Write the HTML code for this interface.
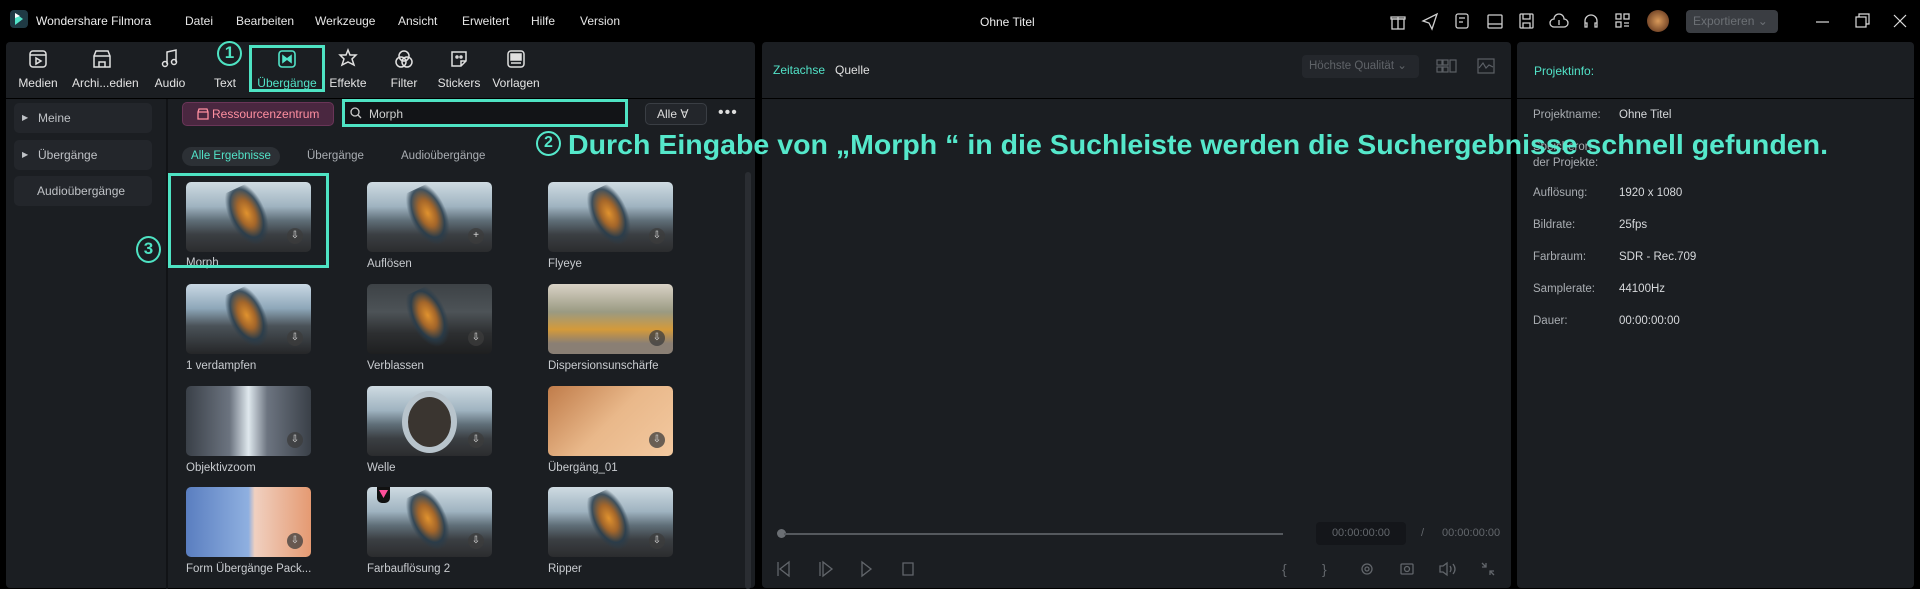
<!DOCTYPE html>
<html><head><meta charset="utf-8"><style>
*{box-sizing:border-box;margin:0;padding:0}
body{width:1920px;height:589px;background:#000;font-family:"Liberation Sans",sans-serif;color:#cfd2d6;position:relative;overflow:hidden;font-size:12px}
.a{position:absolute}
.panel{position:absolute;background:#1b1e22;border-radius:4px}
.menu span{position:absolute;top:14px;font-size:12px;color:#e6e6e6}
.tb{position:absolute;top:48px;width:60px;text-align:center;font-size:12px;color:#e4e4e4}
.tb svg{display:block;margin:0 auto 6px;width:22px;height:22px}
.side{position:absolute;left:14px;width:138px;height:30px;background:#23262b;border-radius:5px;font-size:12px;color:#bfc2c6;line-height:30px;padding-left:24px}
.th{position:absolute;width:125px;height:70px;border-radius:5px;overflow:hidden;background:linear-gradient(#cfdbe2 0%,#9fb3c0 35%,#5f6e78 55%,#3b3f43 75%,#2b2c2e 100%)}
.th .fig{position:absolute;left:44px;top:4px;width:36px;height:60px;background:radial-gradient(ellipse at 50% 45%,#e0922e 0%,#a4662a 30%,rgba(40,60,75,.85) 55%,transparent 72%);transform:rotate(-25deg)}
.th .dl{position:absolute;right:8px;bottom:8px;width:16px;height:16px;border-radius:50%;background:rgba(60,60,60,.75);color:#ddd;font-size:10px;text-align:center;line-height:16px}
.lbl{position:absolute;font-size:11.5px;color:#c9ccd0;white-space:nowrap}
.ri span{position:absolute;font-size:11.5px}
.k{color:#a9adb2}.v{color:#d7d9dc}
</style></head><body>
<div class="a" style="left:10px;top:10px;width:18px;height:18px;border-radius:4px;background:#1f3a44"></div>
<svg class="a" style="left:12px;top:12px" width="14" height="14"><path d="M3 1 L11 7 L3 13 Z" fill="#52e3c8"/><path d="M3 1 L8 4 L3 6Z" fill="#fff"/></svg>
<div class="a" style="left:36px;top:14px;font-size:12px;color:#eee">Wondershare Filmora</div>
<div class="menu"><span style="left:185px">Datei</span><span style="left:236px">Bearbeiten</span><span style="left:315px">Werkzeuge</span><span style="left:398px">Ansicht</span><span style="left:462px">Erweitert</span><span style="left:531px">Hilfe</span><span style="left:580px">Version</span></div>
<div class="a" style="left:980px;top:15px;font-size:12px;color:#eee">Ohne Titel</div>
<svg class="a" style="left:1390px;top:12px" width="270" height="20" fill="none" stroke="#cfcfcf" stroke-width="1.3">
<g><rect x="2" y="7" width="12" height="10"/><path d="M1 5h14v2H1zM8 5v12"/></g>
<g transform="translate(32,0)"><path d="M1 9 L15 2 L10 17 L7 11Z"/></g>
<g transform="translate(64,0)"><rect x="2" y="2" width="12" height="14" rx="2"/><path d="M5 6h6M5 10h4"/></g>
<g transform="translate(96,0)"><rect x="2" y="3" width="14" height="13" rx="1"/><path d="M2 12h14"/></g>
<g transform="translate(128,0)"><rect x="2" y="2" width="13" height="14" rx="1"/><path d="M5 2v5h7V2M5 16v-5h7v5"/></g>
<g transform="translate(160,0)"><path d="M4 15a4 4 0 0 1 0-8a5 5 0 0 1 10 0a4 4 0 0 1 0 8z"/><path d="M9 8v5"/></g>
<g transform="translate(192,0)"><path d="M3 11V9a6 6 0 0 1 12 0v2M3 11h2v4H3zM13 11h2v4h-2z"/></g>
<g transform="translate(224,0)"><rect x="2" y="2" width="5" height="5"/><rect x="10" y="2" width="5" height="5"/><rect x="2" y="10" width="5" height="5"/><path d="M10 11h5M10 14h5"/></g>
</svg>
<div class="a" style="left:1647px;top:10px;width:22px;height:22px;border-radius:50%;background:radial-gradient(#d99a5a,#7a4a2a 70%,#333)"></div>
<div class="a" style="left:1686px;top:10px;width:92px;height:23px;border-radius:4px;background:#3a3d42;color:#6c7075;font-size:12px;line-height:23px;padding-left:7px">Exportieren &#8964;</div>
<svg class="a" style="left:1812px;top:12px" width="100" height="18" fill="none" stroke="#ddd" stroke-width="1.2"><path d="M4 10h13"/><rect x="44" y="5" width="10" height="10"/><path d="M47 5V2h10v10h-3"/><path d="M82 3l12 12M94 3L82 15"/></svg>

<div class="panel" style="left:6px;top:42px;width:749px;height:546px"></div>
<div class="a" style="left:6px;top:98px;width:749px;height:1px;background:#000"></div>
<div class="a" style="left:166px;top:99px;width:2px;height:490px;background:#111316"></div>
<div class="tb" style="left:8px"><svg viewBox="0 0 22 22" fill="none" stroke="#e0e0e0" stroke-width="1.5"><rect x="3" y="3" width="16" height="16" rx="3"/><path d="M3 7h16M9 10l5 3-5 3z"/></svg>Medien</div>
<div class="tb" style="left:72px"><svg viewBox="0 0 22 22" fill="none" stroke="#e0e0e0" stroke-width="1.5"><path d="M3 8l2-5h12l2 5v11H3z M3 8h16M8 19v-5h6v5"/></svg>Archi...edien</div>
<div class="tb" style="left:140px"><svg viewBox="0 0 22 22" fill="none" stroke="#e0e0e0" stroke-width="1.5"><path d="M8 16V4l9-2v12"/><circle cx="6" cy="16" r="2.5"/><circle cx="15" cy="14" r="2.5"/></svg>Audio</div>
<div class="tb" style="left:195px"><svg viewBox="0 0 22 22"></svg>Text</div>
<div class="tb" style="left:257px;color:#52e3c8"><svg viewBox="0 0 22 22" fill="none" stroke="#52e3c8" stroke-width="1.6"><rect x="3" y="3" width="16" height="16" rx="3"/><path d="M7 8l4 3-4 3zM15 8l-4 3 4 3z" fill="#52e3c8"/></svg>Übergänge</div>
<div class="tb" style="left:318px"><svg viewBox="0 0 22 22" fill="none" stroke="#e0e0e0" stroke-width="1.5"><path d="M11 2l2 5 6 0-4 4 2 6-6-3-6 3 2-6-4-4 6 0z"/></svg>Effekte</div>
<div class="tb" style="left:374px"><svg viewBox="0 0 22 22" fill="none" stroke="#e0e0e0" stroke-width="1.5"><circle cx="11" cy="8" r="5"/><circle cx="8" cy="14" r="5"/><circle cx="14" cy="14" r="5"/></svg>Filter</div>
<div class="tb" style="left:429px"><svg viewBox="0 0 22 22" fill="none" stroke="#e0e0e0" stroke-width="1.5"><path d="M4 4h14v9l-5 5H4z M13 18v-5h5"/><circle cx="9" cy="9" r="1"/><circle cx="13" cy="9" r="1"/></svg>Stickers</div>
<div class="tb" style="left:486px"><svg viewBox="0 0 22 22" fill="none" stroke="#e0e0e0" stroke-width="1.5"><rect x="3" y="3" width="16" height="16" rx="3"/><rect x="6" y="6" width="10" height="6" fill="#e0e0e0"/><path d="M6 15h10"/></svg>Vorlagen</div>
<div class="a" style="left:249px;top:45px;width:76px;height:47px;border:3px solid #4ee3c3"></div>
<div class="a" style="left:217px;top:41px;width:25px;height:25px;border:2.5px solid #4ee3c3;border-radius:50%;color:#4ee3c3;font-weight:bold;font-size:17px;text-align:center;line-height:20px;background:#1b1e22">1</div>

<div class="side" style="top:103px"><span style="position:absolute;left:8px;font-size:8px">&#9654;</span>Meine</div>
<div class="side" style="top:140px"><span style="position:absolute;left:8px;font-size:8px">&#9654;</span>Übergänge</div>
<div class="side" style="top:176px;padding-left:23px">Audioübergänge</div>

<div class="a" style="left:182px;top:102px;width:152px;height:24px;border-radius:5px;background:#4a2740;border:1px solid #6a3558;color:#ff8fa0;font-size:12px;line-height:22px;padding-left:29px">Ressourcenzentrum</div>
<svg class="a" style="left:196px;top:107px" width="14" height="14" fill="none" stroke="#ff8fa0" stroke-width="1.3"><path d="M2 5l1-3h8l1 3v7H2zM2 5h10"/></svg>
<div class="a" style="left:342px;top:99px;width:286px;height:28px;border:3px solid #4ee3c3;background:#121417"></div>
<svg class="a" style="left:350px;top:107px" width="12" height="12" fill="none" stroke="#ccc" stroke-width="1.3"><circle cx="5" cy="5" r="4"/><path d="M8 8l3 3"/></svg>
<div class="a" style="left:369px;top:107px;font-size:12px;color:#d0d0d0">Morph</div>
<div class="a" style="left:645px;top:103px;width:62px;height:22px;border:1px solid #3a3e44;border-radius:5px;background:#23262b;color:#ddd;font-size:12px;line-height:20px;padding-left:11px">Alle &#8704;</div>
<div class="a" style="left:718px;top:104px;font-size:16px;color:#ddd;letter-spacing:1px">•••</div>

<div class="a" style="left:182px;top:147px;width:98px;height:19px;border-radius:10px;background:#2c3035;color:#52e3c8;font-size:11.5px;line-height:19px;text-align:center">Alle Ergebnisse</div>
<div class="a" style="left:307px;top:150px;font-size:11.5px;color:#a9adb2">Übergänge</div>
<div class="a" style="left:401px;top:150px;font-size:11.5px;color:#a9adb2">Audioübergänge</div>
<div class="a" style="left:745px;top:172px;width:6px;height:417px;border-radius:3px;background:#2a2d32"></div>

<div class="th" style="left:186px;top:182px"><div class="fig"></div><div class="dl">&#8681;</div></div>
<div class="th" style="left:367px;top:182px"><div class="fig"></div><div class="dl">+</div></div>
<div class="th" style="left:548px;top:182px"><div class="fig"></div><div class="dl">&#8681;</div></div>
<div class="th" style="left:186px;top:284px;background:linear-gradient(#c9d8e4,#8ea7b9 35%,#4a5258 60%,#252628)"><div class="fig"></div><div class="dl">&#8681;</div></div>
<div class="th" style="left:367px;top:284px;background:linear-gradient(#3d4246,#4d5357 40%,#2d2f31 70%,#1e1f20)"><div class="fig"></div><div class="dl">&#8681;</div></div>
<div class="th" style="left:548px;top:284px;background:linear-gradient(#d9d2c6,#9a9a82 40%,#d49a3a 65%,#8a7f74 85%)"><div class="dl">&#8681;</div></div>
<div class="th" style="left:186px;top:386px;background:linear-gradient(90deg,#3a4048,#6c7480 35%,#dfe8ee 50%,#6c7480 65%,#3a4048)"><div class="dl">&#8681;</div></div>
<div class="th" style="left:367px;top:386px"><div class="a" style="left:35px;top:5px;width:55px;height:62px;border-radius:50%;border:6px solid #b8c4cc;background:#3a3530"></div><div class="dl">&#8681;</div></div>
<div class="th" style="left:548px;top:386px;background:linear-gradient(135deg,#c07c4a,#e9b88a 50%,#f3c9a0)"><div class="dl">&#8681;</div></div>
<div class="th" style="left:186px;top:487px;background:linear-gradient(90deg,#5a7ec0,#8fb0e0 50%,#f0d0c0 55%,#e59a72)"><div class="dl">&#8681;</div></div>
<div class="th" style="left:367px;top:487px"><div class="fig"></div><div class="a" style="left:10px;top:0;width:13px;height:16px;background:#111;border-radius:0 0 5px 5px"></div><div class="a" style="left:12px;top:3px;width:9px;height:8px;background:#ff4f9a;clip-path:polygon(0 0,100% 0,50% 100%)"></div><div class="dl">&#8681;</div></div>
<div class="th" style="left:548px;top:487px"><div class="fig"></div><div class="dl">&#8681;</div></div>
<div class="lbl" style="left:186px;top:257px">Morph</div>
<div class="lbl" style="left:367px;top:258px">Auflösen</div>
<div class="lbl" style="left:548px;top:258px">Flyeye</div>
<div class="lbl" style="left:186px;top:360px">1 verdampfen</div>
<div class="lbl" style="left:367px;top:360px">Verblassen</div>
<div class="lbl" style="left:548px;top:360px">Dispersionsunschärfe</div>
<div class="lbl" style="left:186px;top:462px">Objektivzoom</div>
<div class="lbl" style="left:367px;top:462px">Welle</div>
<div class="lbl" style="left:548px;top:462px">Übergäng_01</div>
<div class="lbl" style="left:186px;top:563px">Form Übergänge Pack...</div>
<div class="lbl" style="left:367px;top:563px">Farbauflösung 2</div>
<div class="lbl" style="left:548px;top:563px">Ripper</div>
<div class="a" style="left:168px;top:173px;width:161px;height:95px;border:3px solid #4ee3c3"></div>
<div class="a" style="left:136px;top:236px;width:25px;height:27px;border:2.5px solid #4ee3c3;border-radius:50%;color:#4ee3c3;font-weight:bold;font-size:17px;text-align:center;line-height:22px">3</div>

<div class="panel" style="left:762px;top:42px;width:749px;height:546px"></div>
<div class="a" style="left:762px;top:98px;width:749px;height:1px;background:#000"></div>
<div class="a" style="left:773px;top:63px;font-size:12px;color:#52e3c8">Zeitachse</div>
<div class="a" style="left:835px;top:63px;font-size:12px;color:#e0e0e0">Quelle</div>
<div class="a" style="left:1302px;top:55px;width:117px;height:23px;border-radius:4px;background:#24272c;color:#5f6368;font-size:11.5px;line-height:23px;padding-left:7px">Höchste Qualität &#8964;</div>
<svg class="a" style="left:1436px;top:58px" width="60" height="18" fill="none" stroke="#5c6066" stroke-width="1.2"><rect x="1" y="2" width="5" height="5"/><rect x="7" y="2" width="5" height="5"/><rect x="1" y="9" width="5" height="5"/><rect x="7" y="9" width="5" height="5"/><rect x="14" y="2" width="6" height="12"/><rect x="42" y="1" width="16" height="14"/><path d="M43 10l4-5 3 5 3-3 4 2"/></svg>
<div class="a" style="left:777px;top:529px;width:9px;height:9px;border-radius:50%;background:#6b6f74"></div>
<div class="a" style="left:784px;top:533px;width:499px;height:2px;background:#55595e"></div>
<div class="a" style="left:1316px;top:522px;width:90px;height:23px;border-radius:4px;background:#14161a;color:#63676c;font-size:11px;line-height:23px;text-align:center">00:00:00:00</div>
<div class="a" style="left:1421px;top:527px;color:#63676c;font-size:11px">/</div>
<div class="a" style="left:1442px;top:527px;color:#63676c;font-size:11px">00:00:00:00</div>
<svg class="a" style="left:775px;top:559px" width="735" height="20" fill="none" stroke="#62666b" stroke-width="1.3">
<path d="M3 3v14M14 3L5 10l9 7zM45 3v14M48 3l9 7-9 7zM87 3l9 7-9 7zM128 4h10v12h-10z"/>
<text x="507" y="15" fill="#62666b" stroke="none" font-size="14" font-family="Liberation Sans">{</text>
<text x="547" y="15" fill="#62666b" stroke="none" font-size="14" font-family="Liberation Sans">}</text>
<circle cx="592" cy="10" r="5"/><circle cx="592" cy="10" r="2"/>
<rect x="626" y="5" width="12" height="10" rx="1"/><circle cx="632" cy="10" r="2.5"/>
<path d="M665 7h3l4-3v12l-4-3h-3zM675 7q2 3 0 6M678 5q4 5 0 10M707 4l4 4M711 4v4h-4M719 16l-4-4M715 16v-4h4"/>
</svg>

<div class="panel" style="left:1517px;top:42px;width:397px;height:546px"></div>
<div class="a" style="left:1517px;top:98px;width:397px;height:1px;background:#000"></div>
<div class="a" style="left:1534px;top:64px;font-size:12px;color:#52e3c8">Projektinfo:</div>
<div class="ri">
<span class="k" style="left:1533px;top:109px">Projektname:</span><span class="v" style="left:1619px;top:109px">Ohne Titel</span>
<span class="k" style="left:1533px;top:141px">Speicherort</span>
<span class="k" style="left:1533px;top:157px">der Projekte:</span>
<span class="k" style="left:1533px;top:187px">Auflösung:</span><span class="v" style="left:1619px;top:187px">1920 x 1080</span>
<span class="k" style="left:1533px;top:219px">Bildrate:</span><span class="v" style="left:1619px;top:219px">25fps</span>
<span class="k" style="left:1533px;top:251px">Farbraum:</span><span class="v" style="left:1619px;top:251px">SDR - Rec.709</span>
<span class="k" style="left:1533px;top:283px">Samplerate:</span><span class="v" style="left:1619px;top:283px">44100Hz</span>
<span class="k" style="left:1533px;top:315px">Dauer:</span><span class="v" style="left:1619px;top:315px">00:00:00:00</span>
</div>

<svg class="a" style="left:530px;top:124px" width="1300" height="40"><text x="38" y="30" font-family="Liberation Sans,sans-serif" font-weight="bold" font-size="28" fill="#55e8cb" textLength="1260" lengthAdjust="spacingAndGlyphs">Durch Eingabe von „Morph “ in die Suchleiste werden die Suchergebnisse schnell gefunden.</text></svg>
<div class="a" style="left:536px;top:131px;width:25px;height:25px;border:2.5px solid #55e8cb;border-radius:50%;color:#55e8cb;font-weight:bold;font-size:16px;text-align:center;line-height:20px">2</div>
</body></html>
